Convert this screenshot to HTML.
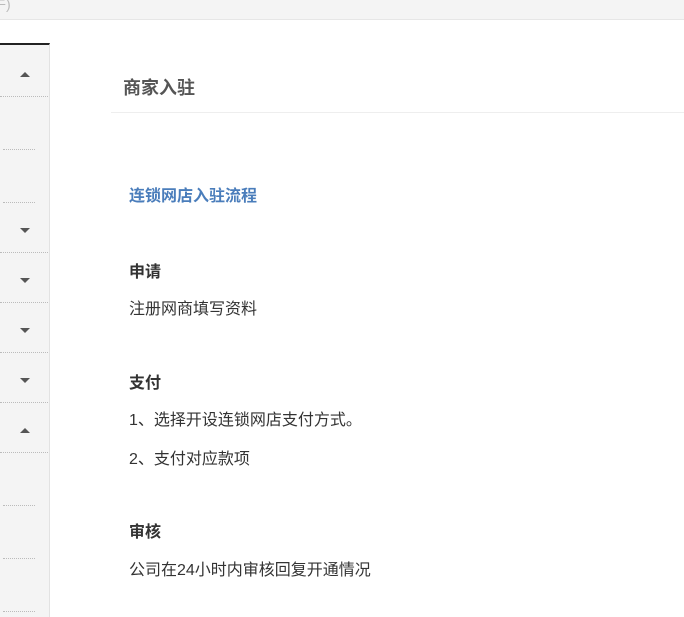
<!DOCTYPE html>
<html><head><meta charset="utf-8"><style>
body{margin:0;width:684px;height:615px;overflow:hidden;background:#fff;font-family:"Liberation Sans","Noto Sans CJK SC",sans-serif;position:relative}
.top{position:absolute;left:0;top:0;width:684px;height:19px;background:#f4f4f4;border-bottom:1px solid #e6e6e6}
.top span{position:absolute;left:-8px;top:-6px;font-size:14px;color:#bbb}
.side{position:absolute;left:0;top:43px;width:49px;height:572px;background:#f4f4f4;border-right:1px solid #e2e2e2;border-top:2px solid #222}
.dot{position:absolute;left:0;height:0;border-top:1px dotted #bbb}
.up,.dn{position:absolute;left:20px;width:0;height:0;border-left:5px solid transparent;border-right:5px solid transparent}
.up{border-bottom:5px solid #555}.dn{border-top:5px solid #555}
.t{position:absolute;white-space:nowrap;line-height:1}
</style></head><body>
<div class="top"><span>牛)</span></div>
<div class="side"></div>
<div class="dot" style="top:96px;width:48px"></div>
<div class="dot" style="top:149px;left:3px;width:32px"></div>
<div class="dot" style="top:202px;left:3px;width:32px"></div>
<div class="dot" style="top:252px;width:48px"></div>
<div class="dot" style="top:302px;width:48px"></div>
<div class="dot" style="top:352px;width:48px"></div>
<div class="dot" style="top:402px;width:48px"></div>
<div class="dot" style="top:452px;width:48px"></div>
<div class="dot" style="top:505px;left:3px;width:32px"></div>
<div class="dot" style="top:558px;left:3px;width:32px"></div>
<div class="dot" style="top:611px;left:3px;width:32px"></div>
<div class="up" style="top:72px"></div>
<div class="dn" style="top:228px"></div>
<div class="dn" style="top:278px"></div>
<div class="dn" style="top:328px"></div>
<div class="dn" style="top:378px"></div>
<div class="up" style="top:428px"></div>
<div class="t" style="left:123px;top:79px;font-size:18px;font-weight:bold;color:#555">商家入驻</div>
<div style="position:absolute;left:111px;top:112px;width:573px;height:1px;background:#eee"></div>
<div class="t" style="left:129px;top:189px;font-size:16px;font-weight:bold;color:#4a7dbb">连锁网店入驻流程</div>
<div class="t" style="left:129px;top:265px;font-size:16px;font-weight:bold;color:#333">申请</div>
<div class="t" style="left:129px;top:302px;font-size:16px;color:#333">注册网商填写资料</div>
<div class="t" style="left:129px;top:376px;font-size:16px;font-weight:bold;color:#333">支付</div>
<div class="t" style="left:129px;top:413px;font-size:16px;color:#333">1、选择开设连锁网店支付方式。</div>
<div class="t" style="left:129px;top:452px;font-size:16px;color:#333">2、支付对应款项</div>
<div class="t" style="left:129px;top:525px;font-size:16px;font-weight:bold;color:#333">审核</div>
<div class="t" style="left:129px;top:563px;font-size:16px;color:#333">公司在24小时内审核回复开通情况</div>
</body></html>
